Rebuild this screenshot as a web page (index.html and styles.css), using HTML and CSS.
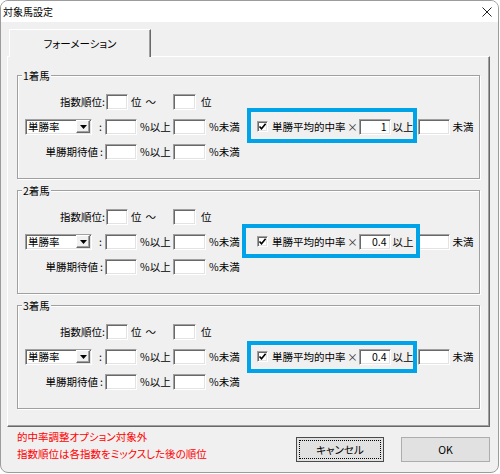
FILE: index.html
```html
<!DOCTYPE html>
<html lang="ja">
<head>
<meta charset="utf-8">
<title>対象馬設定</title>
<link rel="stylesheet" href="styles.css">
</head>
<body>
<div class="window">
  <div class="titlebar">
    <span class="title">対象馬設定</span>
    <span class="close"><svg width="10" height="10" viewBox="0 0 10 10"><path d="M0.5 0.5 L9.5 9.5 M9.5 0.5 L0.5 9.5" stroke="#222" stroke-width="1" fill="none"/></svg></span>
  </div>
  <div class="client">
    <div class="tabs">
      <div class="tab-strip"><div class="tab">フォーメーション</div></div>
      <div class="tab-page">

        <div class="group g1">
          <span class="legend">1着馬</span>
          <div class="row">
            <span class="lbl-a">指数順位:</span>
            <span class="box w22 ml1"></span>
            <span class="mid">位<span class="tilde">～</span></span>
            <span class="box w23"></span>
            <span class="ml5">位</span>
          </div>
          <div class="row">
            <span class="select"><span class="sel-text">単勝率</span><span class="sel-btn"><svg width="7" height="4" viewBox="0 0 7 4"><path d="M0 0 H7 L3.5 4 Z" fill="#000"/></svg></span></span>
            <span class="colon">:</span>
            <span class="box w32"></span>
            <span class="unit">%以上</span>
            <span class="box w33"></span>
            <span class="unit2">%未満</span>
            <span class="cbgroup">
              <span class="check"><svg width="9" height="9" viewBox="0 0 9 9"><path d="M1.5 4.5 L3.5 6.8 L7.6 1.8" stroke="#000" stroke-width="1.6" fill="none"/></svg></span>
              <span class="cb-label">単勝平均的中率</span>
              <span class="times">×</span>
              <span class="box w32 num">1</span>
              <span class="ijo">以上</span>
              <span class="hl"></span>
            </span>
            <span class="box w32 ml4"></span>
            <span class="ml3">未満</span>
          </div>
          <div class="row">
            <span class="lbl-b">単勝期待値</span>
            <span class="colon-b">:</span>
            <span class="box w32"></span>
            <span class="unit">%以上</span>
            <span class="box w33"></span>
            <span class="unit2">%未満</span>
          </div>
        </div>

        <div class="group g2">
          <span class="legend">2着馬</span>
          <div class="row">
            <span class="lbl-a">指数順位:</span>
            <span class="box w22 ml1"></span>
            <span class="mid">位<span class="tilde">～</span></span>
            <span class="box w23"></span>
            <span class="ml5">位</span>
          </div>
          <div class="row">
            <span class="select"><span class="sel-text">単勝率</span><span class="sel-btn"><svg width="7" height="4" viewBox="0 0 7 4"><path d="M0 0 H7 L3.5 4 Z" fill="#000"/></svg></span></span>
            <span class="colon">:</span>
            <span class="box w32"></span>
            <span class="unit">%以上</span>
            <span class="box w33"></span>
            <span class="unit2">%未満</span>
            <span class="cbgroup">
              <span class="check"><svg width="9" height="9" viewBox="0 0 9 9"><path d="M1.5 4.5 L3.5 6.8 L7.6 1.8" stroke="#000" stroke-width="1.6" fill="none"/></svg></span>
              <span class="cb-label">単勝平均的中率</span>
              <span class="times">×</span>
              <span class="box w32 num">0.4</span>
              <span class="ijo">以上</span>
              <span class="hl"></span>
            </span>
            <span class="box w32 ml4"></span>
            <span class="ml3">未満</span>
          </div>
          <div class="row">
            <span class="lbl-b">単勝期待値</span>
            <span class="colon-b">:</span>
            <span class="box w32"></span>
            <span class="unit">%以上</span>
            <span class="box w33"></span>
            <span class="unit2">%未満</span>
          </div>
        </div>

        <div class="group g3">
          <span class="legend">3着馬</span>
          <div class="row">
            <span class="lbl-a">指数順位:</span>
            <span class="box w22 ml1"></span>
            <span class="mid">位<span class="tilde">～</span></span>
            <span class="box w23"></span>
            <span class="ml5">位</span>
          </div>
          <div class="row">
            <span class="select"><span class="sel-text">単勝率</span><span class="sel-btn"><svg width="7" height="4" viewBox="0 0 7 4"><path d="M0 0 H7 L3.5 4 Z" fill="#000"/></svg></span></span>
            <span class="colon">:</span>
            <span class="box w32"></span>
            <span class="unit">%以上</span>
            <span class="box w33"></span>
            <span class="unit2">%未満</span>
            <span class="cbgroup">
              <span class="check"><svg width="9" height="9" viewBox="0 0 9 9"><path d="M1.5 4.5 L3.5 6.8 L7.6 1.8" stroke="#000" stroke-width="1.6" fill="none"/></svg></span>
              <span class="cb-label">単勝平均的中率</span>
              <span class="times">×</span>
              <span class="box w32 num">0.4</span>
              <span class="ijo">以上</span>
              <span class="hl"></span>
            </span>
            <span class="box w32 ml4"></span>
            <span class="ml3">未満</span>
          </div>
          <div class="row">
            <span class="lbl-b">単勝期待値</span>
            <span class="colon-b">:</span>
            <span class="box w32"></span>
            <span class="unit">%以上</span>
            <span class="box w33"></span>
            <span class="unit2">%未満</span>
          </div>
        </div>

      </div>
    </div>
    <div class="footer">
      <div class="notes">
        <p>的中率調整オプション対象外</p>
        <p>指数順位は各指数をミックスした後の順位</p>
      </div>
      <div class="buttons">
        <button class="btn btn-cancel">キャンセル</button>
        <button class="btn btn-ok">OK</button>
      </div>
    </div>
  </div>
</div>
</body>
</html>
```

FILE: styles.css
```css
* { box-sizing: border-box; }
html, body { margin: 0; padding: 0; background: #fff; }
body {
  font-family: "Noto Sans CJK JP", "Noto Sans", sans-serif;
  font-size: 10.5px;
  color: #000;
  font-feature-settings: "palt";
}
.window {
  width: 499px;
  height: 473px;
  border: 1px solid #9c9c9c;
  border-radius: 8px;
  overflow: hidden;
  display: flex;
  flex-direction: column;
  background: #f0f0f0;
}
.titlebar {
  height: 21px;
  flex: none;
  background: #fff;
  display: flex;
  align-items: center;
  justify-content: space-between;
  padding: 0 6px 0 2px;
  font-size: 10px;
}
.close { display: flex; }
.client { flex: 1; padding: 7px 0 0 6px; }

.tab-strip { display: flex; padding-left: 2px; position: relative; z-index: 1; }
.tab {
  width: 142px;
  height: 28px;
  margin-bottom: -1px;
  background: #f0f0f0;
  border-top: 1px solid #fff;
  border-left: 1px solid #fff;
  border-right: 1px solid #696969;
  box-shadow: inset -1px 0 #a0a0a0;
  display: flex;
  align-items: center;
  justify-content: center;
}
.tab-page {
  width: 483px;
  height: 371px;
  border-top: 1px solid #fff;
  border-left: 1px solid #fff;
  border-right: 1px solid #696969;
  border-bottom: 1px solid #696969;
  box-shadow: inset -1px -1px #a0a0a0;
  padding: 18px 0 0 9px;
}

.group {
  position: relative;
  width: 463px;
  height: 104px;
  border: 1px solid #a0a0a0;
  box-shadow: inset 1px 1px #fff, 1px 1px #fff;
  padding-top: 13px;
}
.group + .group { margin-top: 11px; }
.legend {
  position: absolute;
  top: -8px;
  left: 4px;
  padding: 0 1px;
  line-height: 15px;
  background: #f0f0f0;
}
.row { display: flex; align-items: center; height: 25px; white-space: nowrap; }

.box {
  display: block;
  height: 16px;
  background: #fff;
  border: 1px solid;
  border-color: #a0a0a0 #fff #fff #a0a0a0;
  box-shadow: inset 1px 1px #696969, inset -1px -1px #e3e3e3;
  line-height: 14px;
}
.num { text-align: right; padding-right: 3px; }
.w22 { width: 22px; }
.w23 { width: 23px; }
.w32 { width: 32px; }
.w33 { width: 33px; }
.ml1 { margin-left: 1px; }
.ml3 { margin-left: 3px; }
.ml4 { margin-left: 4px; }
.ml5 { margin-left: 5px; }

.lbl-a { width: 87px; text-align: right; }
.mid { width: 45px; padding-left: 3px; display: flex; }
.tilde { margin-left: 4px; }
.lbl-b { width: 80px; text-align: right; }
.colon-b { width: 7px; text-align: center; }

.select {
  margin-left: 7px;
  width: 67px;
  height: 16px;
  display: flex;
  align-items: center;
  justify-content: space-between;
  background: #fff;
  border: 1px solid;
  border-color: #a0a0a0 #fff #fff #a0a0a0;
  box-shadow: inset 1px 1px #696969, inset -1px -1px #e3e3e3;
  padding: 1px 1px 1px 2px;
}
.sel-text { line-height: 14px; }
.sel-btn {
  width: 14px;
  height: 13px;
  background: #f0f0f0;
  border: 1px solid;
  border-color: #fff #696969 #696969 #fff;
  box-shadow: inset -1px -1px #a0a0a0;
  display: flex;
  align-items: center;
  justify-content: center;
}
.colon { width: 13px; text-align: right; padding-right: 3px; }
.unit { width: 36px; padding-left: 3px; }
.unit2 { width: 49px; padding-left: 3px; }

.cbgroup {
  position: relative;
  display: flex;
  align-items: center;
  height: 25px;
  padding-left: 2px;
}
.check {
  width: 11px;
  height: 11px;
  background: #fff;
  border: 1px solid;
  border-color: #a0a0a0 #fff #fff #a0a0a0;
  box-shadow: inset 1px 1px #696969, inset -1px -1px #e3e3e3;
  display: flex;
  align-items: center;
  justify-content: center;
}
.cb-label { margin-left: 4px; }
.times { margin-left: 1px; width: 12px; text-align: center; color: #333; }
.ijo { margin-left: 2px; }
.hl {
  position: absolute;
  border: 4px solid #00a2e8;
  top: -6px;
  bottom: -4px;
  left: -8px;
  right: -3px;
  pointer-events: none;
}
.g2 .hl { top: -5px; bottom: -4px; left: -13px; right: -6px; }
.g3 .hl { top: -3px; bottom: -4px; left: -8px; right: -3px; }

.footer {
  display: flex;
  justify-content: space-between;
  padding: 1px 8px 0 10px;
}
.notes p { margin: 0; line-height: 17px; color: #f00; }
.buttons { display: flex; gap: 17px; margin-top: 9px; }
.btn {
  height: 25px;
  background: #e1e1e1;
  border: 1px solid #adadad;
  font: inherit;
  color: #000;
  padding: 0;
  display: flex;
  align-items: center;
  justify-content: center;
}
.btn-cancel { width: 88px; border-color: #4a4a4a; position: relative; }
.btn-cancel::after {
  content: "";
  position: absolute;
  inset: 2px;
  border: 1px dotted #000;
}
.btn-ok { width: 89px; }
```
